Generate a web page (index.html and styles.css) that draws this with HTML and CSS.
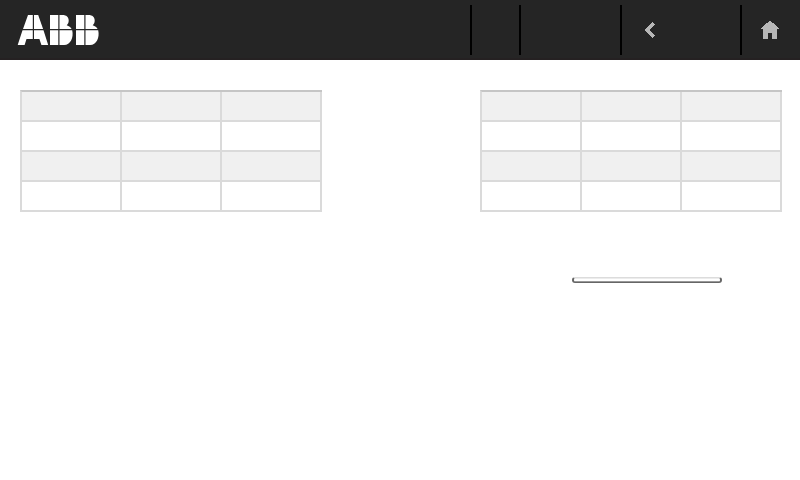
FILE: index.html
```html
<!DOCTYPE html>
<html lang="en">
<head>
<meta charset="utf-8">
<title>ABB</title>
<link rel="stylesheet" href="styles.css">
</head>
<body>
<header class="bar">
  <div class="brand">
    <svg class="logo" width="84" height="32" viewBox="16 14 84 32" aria-label="ABB">
      <g fill="#fff">
        <path d="M28 15H32.8V29H23ZM34 15H38.2L43.1 29H34ZM22.5 30.2H32.8V39H26.5L24.6 45H17.7ZM34 30.2H43.5L48.2 45H41.4L39.4 39H34Z"/>
        <path id="b" d="M50 15H58.3V29H50ZM50 30.2H58.3V45H50ZM59.5 15H62.5C66.4 15 68.7 17.2 68.7 20.5C68.7 22.6 68 24.1 66.7 25.2C69 25.9 70.8 27.3 71.6 29H59.5ZM59.5 30.2H72.2C73.9 37.6 70.3 45 64.2 45H59.5Z"/>
        <use href="#b" x="26"/>
      </g>
    </svg>
  </div>
  <div class="cell cell-a"></div>
  <div class="cell cell-b"></div>
  <a class="cell cell-back" aria-label="Back">
    <svg width="10" height="16" viewBox="0 0 10 16" shape-rendering="crispEdges"><path d="M7.5 0L10 2.5L4.7 8L10 13.5L7.5 16L0 8.5V7.5Z" fill="#b7b7b7"/></svg>
  </a>
  <a class="cell cell-home" aria-label="Home">
    <svg width="18" height="18" viewBox="0 0 18 18" shape-rendering="crispEdges"><path d="M8.5 0H9.5L18 7V8H16V18H11V12H7V18H2V8H0V7Z" fill="#b7b7b7"/></svg>
  </a>
</header>
<main class="content">
  <table class="grid">
    <tr><td></td><td></td><td></td></tr>
    <tr><td></td><td></td><td></td></tr>
    <tr><td></td><td></td><td></td></tr>
    <tr><td></td><td></td><td></td></tr>
  </table>
  <section class="right">
    <table class="grid">
      <tr><td></td><td></td><td></td></tr>
      <tr><td></td><td></td><td></td></tr>
      <tr><td></td><td></td><td></td></tr>
      <tr><td></td><td></td><td></td></tr>
    </table>
    <div class="slim-button"></div>
  </section>
</main>
</body>
</html>
```
FILE: styles.css
```css
* { box-sizing: border-box; }

body {
  margin: 0;
  height: 480px;
  overflow: hidden;
  background: #fff;
  font-family: "Liberation Sans", Arial, sans-serif;
}

.bar {
  display: flex;
  height: 60px;
  padding: 5px 0 3px;
  background: #252525;
  border-bottom: 2px solid #252122;
}

.brand {
  width: 470px;
  padding: 9px 0 0 16px;
}

.logo { display: block; }

.cell {
  display: flex;
  align-items: center;
  height: 50px;
  border-left: 2px solid #000;
}

.cell-a { width: 49px; }
.cell-b { width: 101px; }
.cell-back { width: 120px; padding-left: 23px; }
.cell-home { width: 60px; padding-left: 19px; }

.content {
  display: flex;
  gap: 158px;
  padding: 30px 18px 0 20px;
}

.grid {
  flex: none;
  width: 302px;
  height: 122px;
  border-spacing: 0;
  border-top: 2px solid #c5c5c5;
  border-left: 2px solid #dadada;
  table-layout: fixed;
}

.grid td {
  height: 30px;
  padding: 0;
  border-right: 2px solid #dadada;
  border-bottom: 2px solid #dadada;
}

.grid tr:nth-child(odd) { background: #f0f0f0; }

.slim-button {
  width: 150px;
  height: 6px;
  margin: 65px 0 0 92px;
  border: solid #666;
  border-top-color: #dcdcdc;
  border-width: 1px 2px 1px;
  border-radius: 3px;
  background: linear-gradient(#ececec 1px, #fff 1px 3px, #999 3px);
}
```
